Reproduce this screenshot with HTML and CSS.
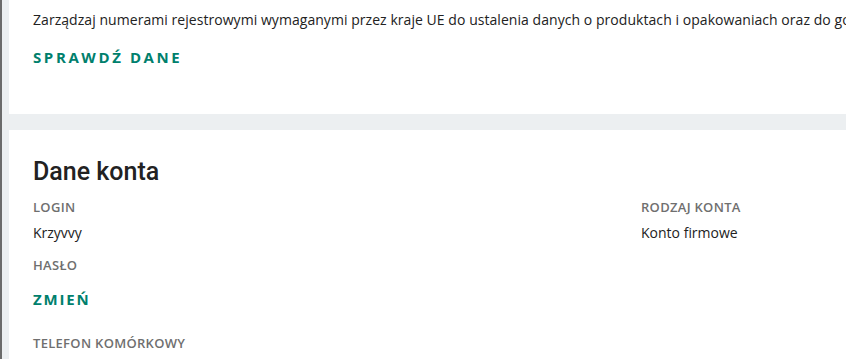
FILE: index.html
```html
<!DOCTYPE html>
<html lang="pl">
<head>
  <meta charset="UTF-8" />
  <title>Ustawienia konta</title>
  <link rel="stylesheet" href="styles.css">
</head>
<body>
  <div class="page">
    <section class="card card-top">
      <p class="desc">Zarządzaj numerami rejestrowymi wymaganymi przez kraje UE do ustalenia danych o produktach i opakowaniach oraz do gospodarki odpadami.</p>
      <a class="link-btn" href="#">Sprawdź dane</a>
    </section>

    <section class="card card-account">
      <h2>Dane konta</h2>
      <div class="account-grid">
        <div class="col">
          <div class="field">
            <div class="label">Login</div>
            <div class="value">Krzyvvy</div>
          </div>
          <div class="field">
            <div class="label">Hasło</div>
            <a class="link-btn small" href="#">Zmień</a>
          </div>
          <div class="field">
            <div class="label">Telefon komórkowy</div>
          </div>
        </div>
        <div class="col">
          <div class="field">
            <div class="label">Rodzaj konta</div>
            <div class="value">Konto firmowe</div>
          </div>
        </div>
      </div>
    </section>
  </div>
</body>
</html>
```

FILE: styles.css
```css
body {
  margin: 0;
  background-color: #eceff1;
  font-family: 'Open Sans', sans-serif;
  color: #222;
  overflow: hidden;
}

.page {
  border-left: 2px solid #6b6b6b;
  padding-left: 7px;
  min-height: 100vh;
  display: flex;
  flex-direction: column;
  gap: 16px;
}

.card {
  background: #ffffff;
  padding: 0 24px;
  overflow: hidden;
}

.card-top {
  height: 114px;
  box-sizing: border-box;
  padding-top: 10px;
}

.desc {
  margin: 0;
  font-size: 14px;
  line-height: 20px;
  letter-spacing: 0.05px;
  white-space: nowrap;
}

.link-btn {
  display: inline-block;
  margin-top: 17px;
  color: #00806d;
  font-weight: 700;
  font-size: 15px;
  letter-spacing: 2.6px;
  text-transform: uppercase;
  text-decoration: none;
}

.link-btn.small {
  margin-top: 16px;
  line-height: 20px;
  letter-spacing: 1.8px;
}

.card-account {
  flex: 1;
  padding-top: 26px;
}

.card-account h2 {
  margin: 0;
  font-family: Roboto, sans-serif;
  font-weight: 500;
  font-size: 25px;
  line-height: 32px;
  color: #222;
}

.account-grid {
  display: grid;
  grid-template-columns: 608px 1fr;
  margin-top: 11px;
}

.field {
  margin-bottom: 14px;
}

.label {
  font-size: 13px;
  font-weight: 600;
  letter-spacing: 0.3px;
  color: #6f6f6f;
  text-transform: uppercase;
  line-height: 16px;
}

.value {
  margin-top: 8px;
  font-size: 14px;
  line-height: 20px;
}

.col .field:nth-child(2) {
  margin-bottom: 25px;
}
```
